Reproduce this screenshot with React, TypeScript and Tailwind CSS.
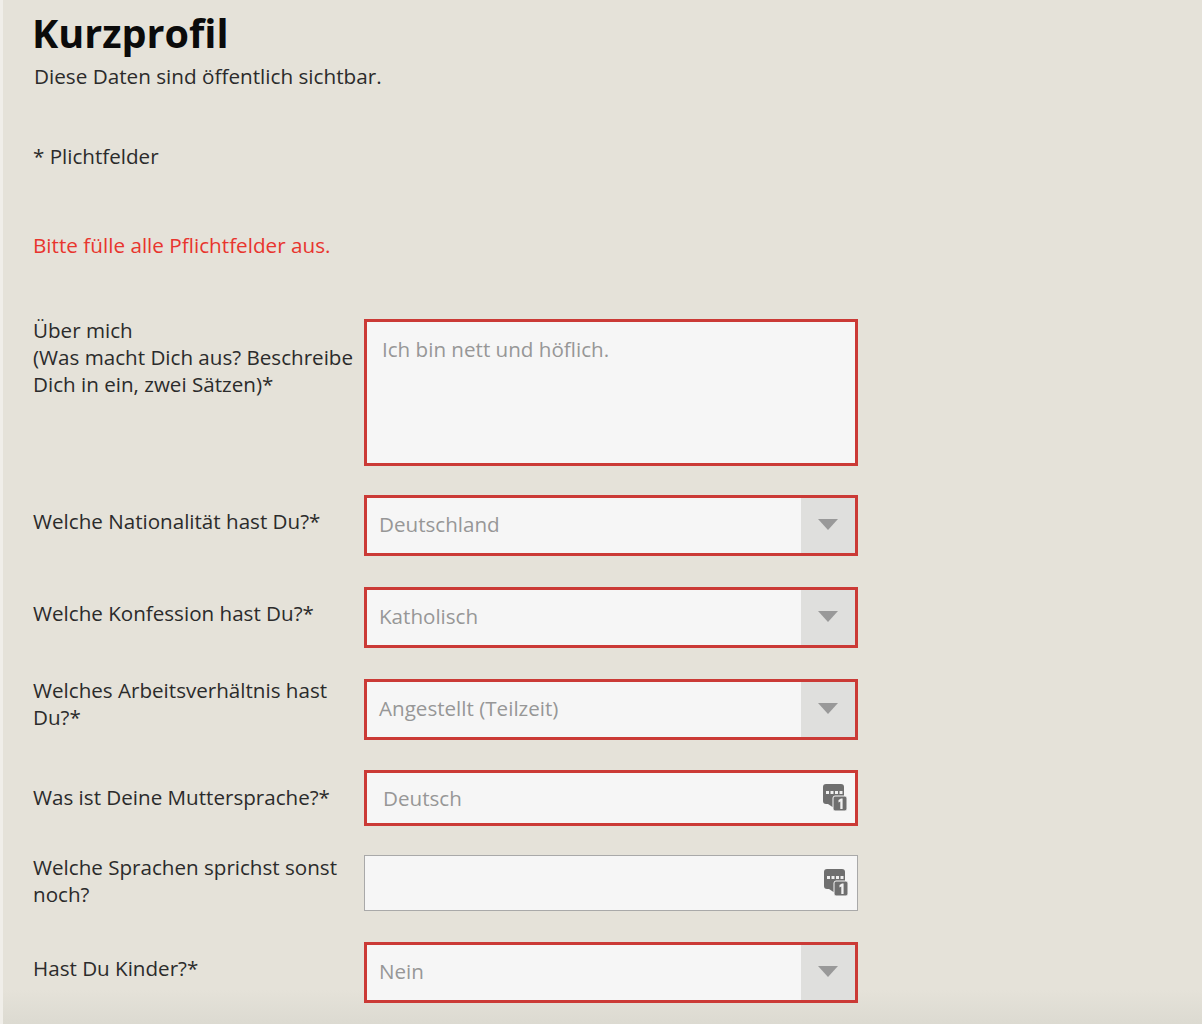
const ChatIcon = () => (
  <svg width="26" height="30" viewBox="0 0 26 30" className="block">
    <rect x="1" y="1" width="21" height="20" rx="3" fill="#6f6f6f" />
    <path d="M6 21h6v4z" fill="#6f6f6f" />
    <rect x="4" y="8" width="3" height="3" fill="#f0f0f0" />
    <rect x="8.5" y="8" width="3" height="3" fill="#f0f0f0" />
    <rect x="13" y="8" width="3" height="3" fill="#f0f0f0" />
    <rect x="17.5" y="8" width="3" height="3" fill="#f0f0f0" />
    <rect x="11" y="13" width="14" height="15" rx="2" fill="#6f6f6f" stroke="#f6f6f6" strokeWidth="1" />
    <path d="M16.5 17l2.5-1.5h1.6v10.500h-2.300v-7.500l-1.800 1z" fill="#f2f2f2" />
  </svg>
);

const Row = ({ label, gap, shift, children }: { label: React.ReactNode; gap: string; shift: string; children: React.ReactNode }) => (
  <div className={`flex items-center ${gap}`}>
    <div className={`w-[331px] shrink-0 pr-1 text-[20.6px] leading-[27px] text-[#2b2b2b] ${shift}`}>{label}</div>
    {children}
  </div>
);

const Select = ({ value }: { value: string }) => (
  <div className="flex h-[61px] w-[494px] border-[3px] border-[#cb3a36] bg-[#f6f6f6]">
    <div className="flex-1 pl-[12px] flex items-center text-[20.6px] text-[#979797] translate-y-[-1px]">{value}</div>
    <div className="w-[54px] bg-[#dfdfdd] flex items-center justify-center">
      <div className="w-0 h-0 border-x-[10px] border-x-transparent border-t-[11px] border-t-[#999999] -translate-y-[1px]" />
    </div>
  </div>
);

const LangInput = ({ value, error }: { value?: string; error?: boolean }) => (
  <div
    className={`flex items-center justify-between h-[56px] w-[494px] bg-[#f6f6f6] ${
      error ? "border-[3px] border-[#cb3a36] pl-[16px] pr-[7px]" : "border border-[#a9a9a9] pl-[18px] pr-[8px]"
    }`}
  >
    <span className="text-[20.6px] text-[#979797]">{value}</span>
    <ChatIcon />
  </div>
);

export default function App() {
  return (
    <div className="relative h-[1024px] w-full overflow-hidden bg-[#e5e2d9] pl-[30px] font-['Open_Sans',sans-serif] border-l-[3px] border-l-[#f0eee9]">
      <div className="absolute inset-x-0 bottom-0 h-[34px] bg-gradient-to-b from-transparent to-[#dcdad1]" />
      <div className="relative">
        <h1 className="-ml-px pt-[8px] text-[39.6px] leading-[50px] font-bold text-[#0b0b0b]">Kurzprofil</h1>
        <p className="ml-px mt-[5px] text-[20.7px] leading-[27px] text-[#2b2b2b]">Diese Daten sind öffentlich sichtbar.</p>
        <p className="mt-[53px] text-[20.6px] leading-[27px] text-[#2b2b2b]">* Plichtfelder</p>
        <p className="mt-[62px] text-[20.7px] leading-[27px] text-[#e8352e]">Bitte fülle alle Pflichtfelder aus.</p>

        <div className="mt-[60px] flex flex-col">
          <div className="flex mb-[29px]">
            <div className="w-[331px] shrink-0 text-[20.6px] leading-[27px] text-[#2b2b2b] -mt-[2px]">
              Über mich
              <br />
              (Was macht Dich aus? Beschreibe Dich in ein, zwei Sätzen)*
            </div>
            <div className="h-[147px] w-[494px] border-[3px] border-[#cb3a36] bg-[#f6f6f6] pl-[15px] pt-[14px] text-[20.6px] leading-[27px] text-[#979797]">
              Ich bin nett und höflich.
            </div>
          </div>
          <Row label="Welche Nationalität hast Du?*" gap="mb-[31px]" shift="-translate-y-[4px]">
            <Select value="Deutschland" />
          </Row>
          <Row label="Welche Konfession hast Du?*" gap="mb-[31px]" shift="-translate-y-[4px]">
            <Select value="Katholisch" />
          </Row>
          <Row label="Welches Arbeitsverhältnis hast Du?*" gap="mb-[30px]" shift="-translate-y-[6px]">
            <Select value="Angestellt (Teilzeit)" />
          </Row>
          <Row label="Was ist Deine Muttersprache?*" gap="mb-[29px]" shift="-translate-y-[1px]">
            <LangInput value="Deutsch" error />
          </Row>
          <Row label="Welche Sprachen sprichst sonst noch?" gap="mb-[31px]" shift="-translate-y-[2px]">
            <LangInput />
          </Row>
          <Row label="Hast Du Kinder?*" gap="" shift="-translate-y-[4px]">
            <Select value="Nein" />
          </Row>
        </div>
      </div>
    </div>
  );
}
